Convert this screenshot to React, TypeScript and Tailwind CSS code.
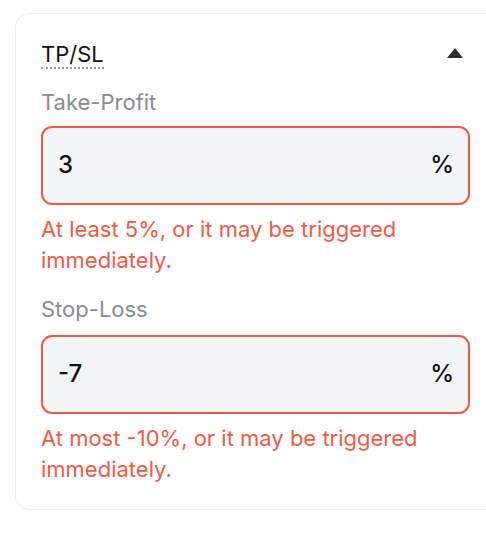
import React from "react";

function Field({ label, value, error, inputMt }: { label: string; value: string; error: string; inputMt: string }) {
  return (
    <div className="flex flex-col">
      <div className="text-[22px] leading-[28px] text-[#8a8c90]">{label}</div>
      <div className={`${inputMt} flex h-[79px] items-center justify-between rounded-[11px] border-2 border-[#f25a48] bg-[#f4f5f7] pl-[15px] pr-[14px]`}>
        <span className="text-[24px] font-medium text-[#111]">{value}</span>
        <span className="text-[24px] font-medium text-[#111]">%</span>
      </div>
      <div className="mt-[9px] text-[22px] leading-[31px] text-[#f25a48]">{error}</div>
    </div>
  );
}

export default function App() {
  return (
    <div className="min-h-[536px] w-[486px] overflow-hidden bg-white pl-[15px] pt-[13px]" style={{ fontFamily: 'Inter, "Liberation Sans", Arial, sans-serif' }}>
      <div className="w-[490px] rounded-[14px] border-[1.5px] border-[#ececec] bg-white pb-[24.5px] pl-[25px] pr-[34px] pt-[26.5px]">
        <div className="flex items-center justify-between">
          <span className="border-b-[2px] border-dotted border-[#999] text-[22px] leading-[26px] text-[#111]">TP/SL</span>
          <svg width="16" height="10" viewBox="0 0 16 10" className="mb-[4px] mr-[7px]">
            <path d="M8 0 L16 10 L0 10 Z" fill="#2e2e30" />
          </svg>
        </div>
        <div className="mt-[19px] flex flex-col gap-[19px]">
          <Field label="Take-Profit" value="3" error="At least 5%, or it may be triggered immediately." inputMt="mt-[10px]" />
          <Field label="Stop-Loss" value="-7" error="At most -10%, or it may be triggered immediately." inputMt="mt-[12px]" />
        </div>
      </div>
    </div>
  );
}
